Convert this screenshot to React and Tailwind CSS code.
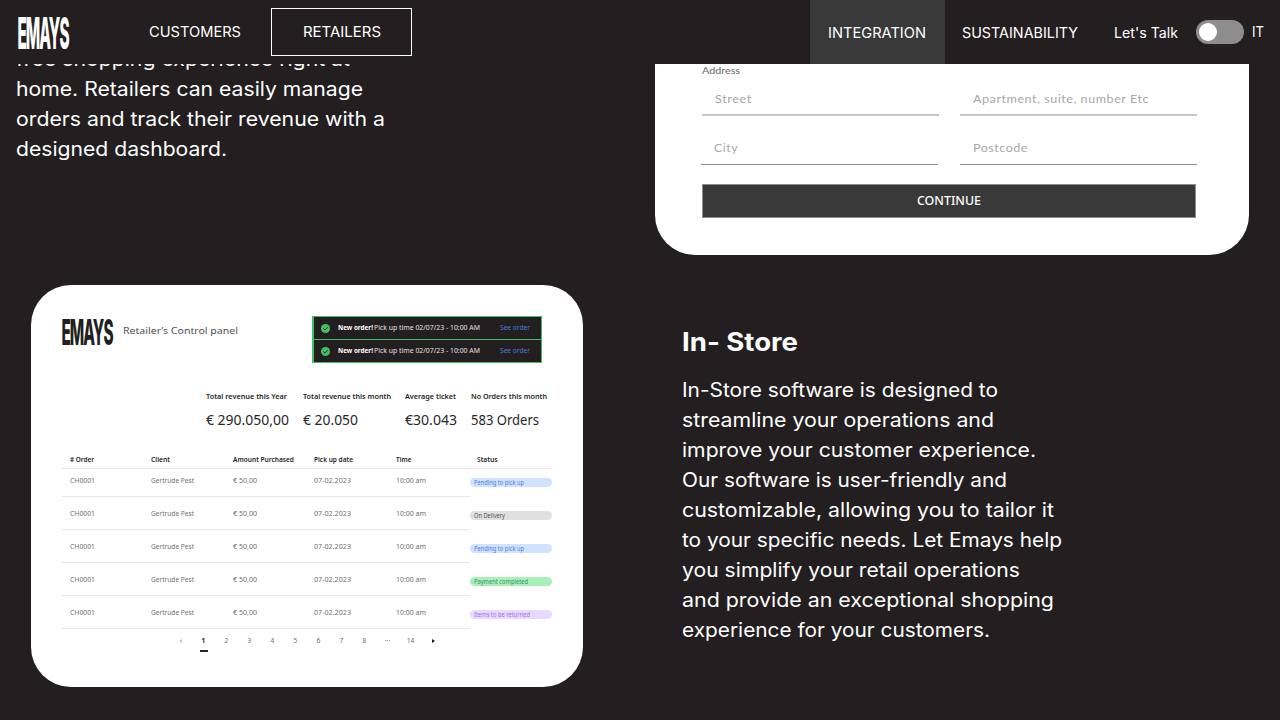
import { useLayoutEffect, useRef, useState } from "react";

// Single line of text, stretched so that it spans `w` pixels.
function Fit({ w, className = "", children }) {
  const ref = useRef(null);
  const [scale, setScale] = useState(1);
  useLayoutEffect(() => {
    const natural = parseFloat(getComputedStyle(ref.current).width);
    setScale(w / natural);
  }, [w]);
  return (
    <span className="inline-block" style={{ width: `${w}px` }}>
      <span
        ref={ref}
        className={`inline-block origin-left whitespace-nowrap ${className}`}
        style={{ transform: `scaleX(${scale})` }}
      >
        {children}
      </span>
    </span>
  );
}

function Logo({ className, height }) {
  return (
    <svg className={className} viewBox={`0 0 52 ${height}`} fill="currentColor" role="img" aria-label="Emays">
      <text
        transform={`translate(-0.6 ${height - 0.3}) scale(0.345 ${height / 33})`}
        fontFamily="Inter, sans-serif"
        fontWeight="800"
        fontSize="44.4"
        textLength="151"
        lengthAdjust="spacing"
        x="0"
        y="0"
      >
        EMAYS
      </text>
    </svg>
  );
}

const introLines = [
  ["free shopping experience right at", 334],
  ["home. Retailers can easily manage", 347],
  ["orders and track their revenue with a", 369],
  ["designed dashboard.", 211],
];

const storeLines = [
  ["In-Store software is designed to", 316],
  ["streamline your operations and", 312],
  ["improve your customer experience.", 354],
  ["Our software is user-friendly and", 325],
  ["customizable, allowing you to tailor it", 372],
  ["to your specific needs. Let Emays help", 380],
  ["you simplify your retail operations", 338],
  ["and provide an exceptional shopping", 372],
  ["experience for your customers.", 308],
];

function Paragraph({ lines }) {
  return (
    <p className="flex flex-col text-[19.5px] leading-[30px]">
      {lines.map(([text, w]) => (
        <span key={text} className="block h-[30px]">
          <Fit w={w}>{text}</Fit>
        </span>
      ))}
    </p>
  );
}

function Header() {
  return (
    <header className="flex h-16 shrink-0 items-center justify-between bg-[#231f20] text-sm">
      <div className="flex items-center">
        <Logo className="ml-[18px] h-[33px] w-[52px] overflow-visible" height={33} />
        <span className="ml-[79px] w-[92px]"><Fit w={92}>CUSTOMERS</Fit></span>
        <span className="ml-[30px] flex h-12 w-[141px] items-center justify-center border border-white">
          <Fit w={78}>RETAILERS</Fit>
        </span>
      </div>
      <div className="flex h-full items-center pr-4">
        <span className="flex h-full w-[135px] items-center bg-[#393939] pt-0.5 pl-[18px]">
          <Fit w={98}>INTEGRATION</Fit>
        </span>
        <span className="w-[169px] pt-0.5 pl-[17.4px]"><Fit w={116}>SUSTAINABILITY</Fit></span>
        <span className="w-[82px] pt-0.5"><Fit w={64}>Let's Talk</Fit></span>
        <span className="flex h-6 w-12 items-center rounded-full bg-[#8d8d8d] pl-[3px]">
          <span className="size-[18px] rounded-full bg-white" />
        </span>
        <span className="ml-2 w-3"><Fit w={12}>IT</Fit></span>
      </div>
    </header>
  );
}

function Field({ label, w, className }) {
  return (
    <div className={`flex h-[25px] w-[237px] items-start pl-[13px] ${className}`}>
      <Fit w={w} className="tracking-[0.5px]">{label}</Fit>
    </div>
  );
}

function AddressForm() {
  return (
    <div className="mr-[31px] h-[191px] w-[594px] rounded-b-[40px] bg-white pl-[47px] font-[Lato,sans-serif] text-[12px] leading-4 text-[#a8a8a8]">
      <div className="h-[18px] text-[10px] leading-3 font-medium text-[#6f6f6f]"><Fit w={38}>Address</Fit></div>
      <div className="flex gap-[21px] pt-[9px]">
        <Field label="Street" w={37} className="border-b-2 border-[#c6c6c6]" />
        <Field label="Apartment, suite, number Etc" w={176} className="border-b-2 border-[#c6c6c6]" />
      </div>
      <div className="-ml-px flex gap-[22px] pt-6">
        <Field label="City" w={24} className="border-b border-[#8d8d8d]" />
        <Field label="Postcode" w={55} className="border-b border-[#8d8d8d]" />
      </div>
      <div className="mt-[19px] flex h-[34px] w-[494px] items-center justify-center border border-[#8d8d8d] bg-[#393939] font-['Noto_Sans',sans-serif] text-[12px] font-medium text-white">
        <Fit w={64}>CONTINUE</Fit>
      </div>
    </div>
  );
}

function Toast() {
  return (
    <div className="flex h-[23px] items-center border-t border-l-2 border-[#42be65] bg-[#231f20] text-[6.6px] text-[#e0e0e0]">
      <svg className="ml-[7px] size-[9px]" viewBox="0 0 9 9">
        <circle cx="4.5" cy="4.5" r="4.5" fill="#42be65" />
        <path d="M2.5 4.6 4 6 6.6 3.3" fill="none" stroke="#231f20" strokeWidth="1" />
      </svg>
      <span className="ml-2 w-[36.5px] font-bold text-white"><Fit w={35}>New order!</Fit></span>
      <span className="w-[125.5px]"><Fit w={106}>Pick up time 02/07/23 - 10:00 AM</Fit></span>
      <span className="text-[#4b7bd8]"><Fit w={30}>See order</Fit></span>
    </div>
  );
}

const stats = [
  ["Total revenue this Year", 81, "€ 290.050,00", 83, "w-[97px]"],
  ["Total revenue this month", 88, "€ 20.050", 55, "w-[102px]"],
  ["Average ticket", 51, "€30.043", 52, "w-[66px]"],
  ["No Orders this month", 76, "583 Orders", 68, "w-[80px]"],
];

const statuses = [
  ["Pending to pick up", 50, "bg-[#d0e2ff] text-[#4a80ea]"],
  ["On Delivery", 31, "bg-[#e0e0e0] text-[#525252]"],
  ["Pending to pick up", 50, "bg-[#d0e2ff] text-[#4a80ea]"],
  ["Payment completed", 54, "bg-[#a7f0ba] text-[#3f8f5c]"],
  ["Items to be returned", 56, "bg-[#e8daff] text-[#a56eea]"],
];

const columns = [["# Order", 24], ["Client", 19], ["Amount Purchased", 61], ["Pick up date", 39], ["Time", 15.5]];
const cells = [["CH0001", 25], ["Gertrude Pest", 43], ["€ 50,00", 24], ["07-02.2023", 37], ["10:00 am", 30]];

const pages = ["2", "3", "4", "5", "6", "7", "8", "···", "14"];

function OrdersTable() {
  return (
    <div className="mt-[25px] w-[490px] text-[6.6px] leading-[9px] text-[#6f6f6f]">
      <div className="flex h-[14px] border-b border-[#e8e8e8] font-semibold text-[#262626]">
        {columns.map(([name, w]) => (
          <span key={name} className="w-[81.4px] pl-2"><Fit w={w}>{name}</Fit></span>
        ))}
        <span className="pl-[8.5px]"><Fit w={20.5}>Status</Fit></span>
      </div>
      {statuses.map(([status, w, tone], i) => (
        <div key={i} className={i === 0 ? "flex h-7" : "flex h-[33px] pt-[5px]"}>
          <div className="flex w-[408px] border-b border-[#e8e8e8] pt-[7px]">
            {cells.map(([value, cw]) => (
              <span key={value} className="w-[81.4px] pl-2"><Fit w={cw}>{value}</Fit></span>
            ))}
          </div>
          <div className={`mt-[9px] h-[9px] w-[82px] rounded-full pl-1 text-[6.2px] ${tone}`}>
            <Fit w={w}>{status}</Fit>
          </div>
        </div>
      ))}
      <div className="ml-[107px] flex pt-[7px] text-center">
        <span className="flex h-[9px] w-[23px] items-center justify-center">
          <svg className="h-1 w-[3px]" viewBox="0 0 3 4"><path d="M3 0v4L0 2z" fill="#c6c6c6" /></svg>
        </span>
        <span className="flex w-[23px] flex-col items-center font-bold text-[#262626]">
          1
          <span className="mt-[4.5px] h-[2.5px] w-2 bg-[#262626]" />
        </span>
        {pages.map((p) => (
          <span key={p} className="w-[23px]">{p}</span>
        ))}
        <span className="flex h-[9px] w-[23px] items-center justify-center">
          <svg className="h-1 w-[3px]" viewBox="0 0 3 4"><path d="M0 0v4L3 2z" fill="#161616" /></svg>
        </span>
      </div>
    </div>
  );
}

function ControlPanel() {
  return (
    <div className="ml-[31px] h-[402px] w-[552px] rounded-[40px] bg-white pt-[31px] pl-[31px] font-['Noto_Sans',sans-serif]">
      <div className="flex h-[47px] items-start">
        <Logo className="mt-[3px] h-[26px] w-[52px] overflow-visible text-[#231f20]" height={26} />
        <span className="mt-[5px] ml-[9px] w-[188.5px] text-[9.8px] leading-5 text-[#525252]">
          <Fit w={115}>Retailer’s Control panel</Fit>
        </span>
        <div className="w-[230.5px] border-r border-b border-[#42be65]">
          <Toast />
          <Toast />
        </div>
      </div>
      <div className="mt-7 ml-[144px] flex h-[39px] text-[#262626]">
        {stats.map(([label, lw, value, vw, width]) => (
          <div key={label} className={`flex flex-col items-start ${width}`}>
            <span className="h-5 text-[7.2px] leading-[10px] font-semibold"><Fit w={lw}>{label}</Fit></span>
            <span className="text-[13.5px] leading-[18px]"><Fit w={vw}>{value}</Fit></span>
          </div>
        ))}
      </div>
      <OrdersTable />
    </div>
  );
}

export default function App() {
  return (
    <div className="flex h-[720px] w-full flex-col overflow-hidden bg-[#231f20] font-[Inter,sans-serif] text-white">
      <Header />
      <section className="flex h-[191px] shrink-0 justify-between overflow-hidden">
        <div className="-mt-5 pl-4">
          <Paragraph lines={introLines} />
        </div>
        <AddressForm />
      </section>
      <section className="mt-[30px] flex">
        <ControlPanel />
        <div className="ml-[99px] pt-[37px]">
          <h2 className="mb-[13px] h-10 text-[25.5px] leading-10 font-bold"><Fit w={116}>In- Store</Fit></h2>
          <Paragraph lines={storeLines} />
        </div>
      </section>
    </div>
  );
}
